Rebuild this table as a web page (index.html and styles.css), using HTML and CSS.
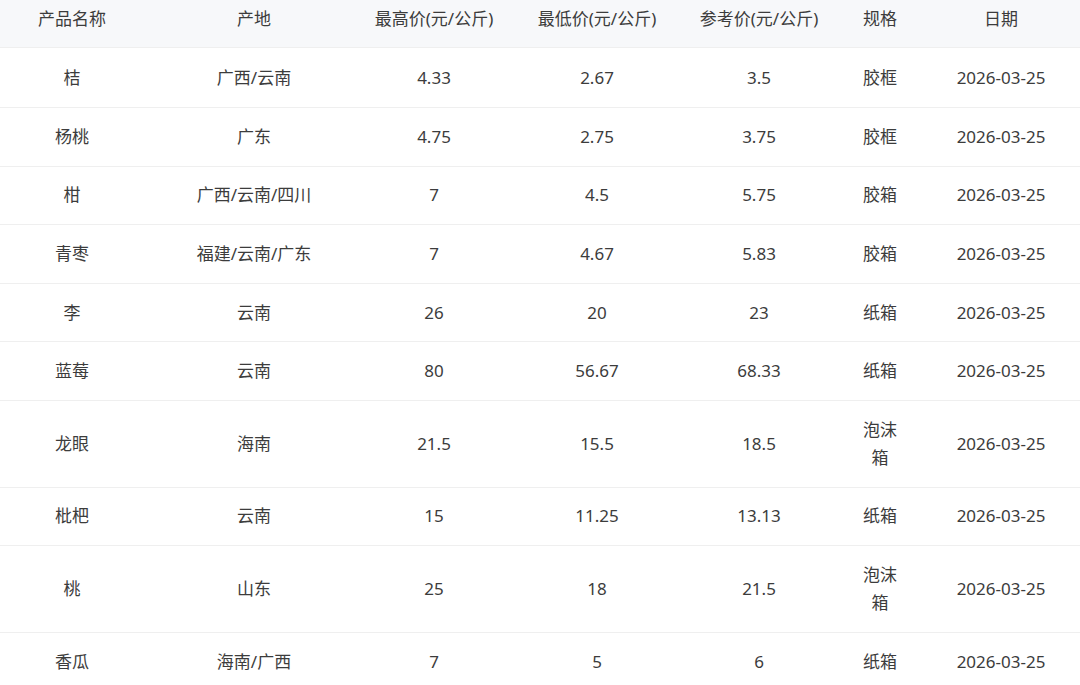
FILE: index.html
```html
<!DOCTYPE html>
<html lang="zh">
<head>
<meta charset="utf-8">
<link rel="stylesheet" href="styles.css">
</head>
<body>
<table class="price-table">
  <colgroup>
    <col class="c-name"><col class="c-origin"><col class="c-max"><col class="c-min"><col class="c-ref"><col class="c-spec"><col class="c-date">
  </colgroup>
  <thead>
    <tr><th>产品名称</th><th>产地</th><th>最高价(元/公斤)</th><th>最低价(元/公斤)</th><th>参考价(元/公斤)</th><th class="spec">规格</th><th class="date">日期</th></tr>
  </thead>
  <tbody>
    <tr class="first"><td>桔</td><td>广西/云南</td><td>4.33</td><td>2.67</td><td>3.5</td><td class="spec">胶框</td><td class="date">2026-03-25</td></tr>
    <tr><td>杨桃</td><td>广东</td><td>4.75</td><td>2.75</td><td>3.75</td><td class="spec">胶框</td><td class="date">2026-03-25</td></tr>
    <tr><td>柑</td><td>广西/云南/四川</td><td>7</td><td>4.5</td><td>5.75</td><td class="spec">胶箱</td><td class="date">2026-03-25</td></tr>
    <tr><td>青枣</td><td>福建/云南/广东</td><td>7</td><td>4.67</td><td>5.83</td><td class="spec">胶箱</td><td class="date">2026-03-25</td></tr>
    <tr><td>李</td><td>云南</td><td>26</td><td>20</td><td>23</td><td class="spec">纸箱</td><td class="date">2026-03-25</td></tr>
    <tr><td>蓝莓</td><td>云南</td><td>80</td><td>56.67</td><td>68.33</td><td class="spec">纸箱</td><td class="date">2026-03-25</td></tr>
    <tr><td>龙眼</td><td>海南</td><td>21.5</td><td>15.5</td><td>18.5</td><td class="spec">泡沫箱</td><td class="date">2026-03-25</td></tr>
    <tr><td>枇杷</td><td>云南</td><td>15</td><td>11.25</td><td>13.13</td><td class="spec">纸箱</td><td class="date">2026-03-25</td></tr>
    <tr><td>桃</td><td>山东</td><td>25</td><td>18</td><td>21.5</td><td class="spec">泡沫箱</td><td class="date">2026-03-25</td></tr>
    <tr><td>香瓜</td><td>海南/广西</td><td>7</td><td>5</td><td>6</td><td class="spec">纸箱</td><td class="date">2026-03-25</td></tr>
  </tbody>
</table>
</body>
</html>
```

FILE: styles.css
```css
html, body {
  margin: 0;
  padding: 0;
  background: #ffffff;
}
body {
  font-family: "Noto Sans", "Noto Sans CJK SC", sans-serif;
  font-size: 17px;
  color: #3c3c3c;
}
.price-table {
  width: 1080px;
  table-layout: fixed;
  border-collapse: collapse;
  border-spacing: 0;
}
.c-name { width: 144px; }
.c-origin { width: 220px; }
.c-max { width: 140px; }
.c-min { width: 186px; }
.c-ref { width: 138px; }
.c-spec { width: 104px; }
.c-date { width: 148px; }

.price-table th,
.price-table td {
  text-align: center;
  vertical-align: middle;
  line-height: 28px;
  padding: 14.8px 2px;
  border-bottom: 1px solid #efefef;
  font-weight: 400;
}
.price-table th {
  background: #f7f8fa;
  padding-top: 5px;
  padding-bottom: 14px;
  color: #3c3c3c;
}
.price-table .first td {
  padding-top: 16px;
  padding-bottom: 15px;
}
.price-table .spec {
  padding-left: 27px;
  padding-right: 27px;
}
.price-table .date {
  padding-right: 12px;
}
```
